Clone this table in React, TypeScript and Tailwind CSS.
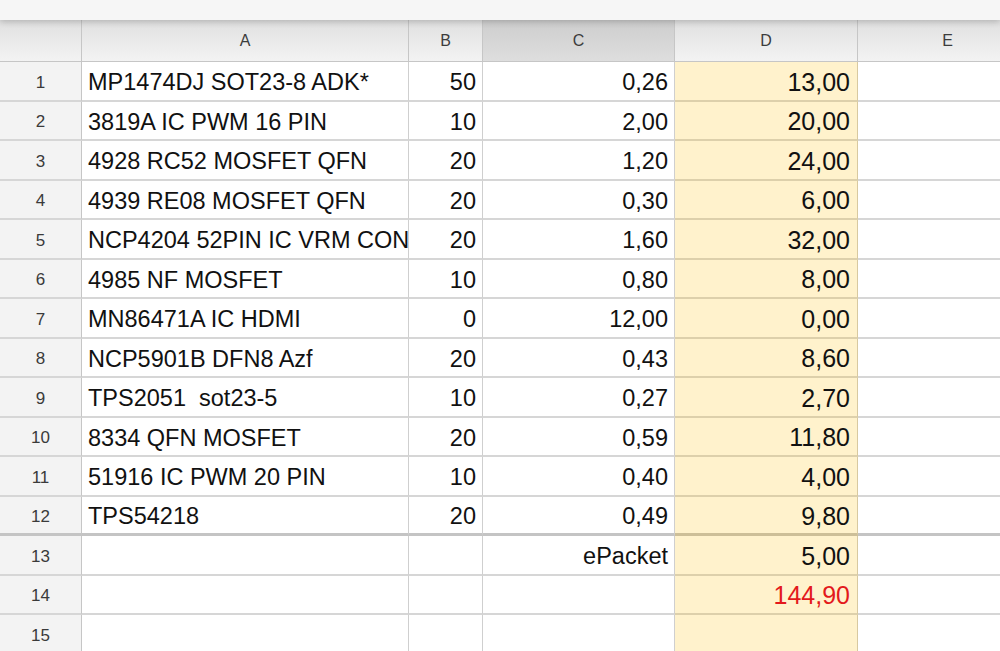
const cols = ["A", "B", "C", "D", "E"];

type Row = { a: string; b: string; c: string; d: string; red?: boolean };

const rows: Row[] = [
  { a: "MP1474DJ SOT23-8 ADK*", b: "50", c: "0,26", d: "13,00" },
  { a: "3819A IC PWM 16 PIN", b: "10", c: "2,00", d: "20,00" },
  { a: "4928 RC52 MOSFET QFN", b: "20", c: "1,20", d: "24,00" },
  { a: "4939 RE08 MOSFET QFN", b: "20", c: "0,30", d: "6,00" },
  { a: "NCP4204 52PIN IC VRM CONTROLLER", b: "20", c: "1,60", d: "32,00" },
  { a: "4985 NF MOSFET", b: "10", c: "0,80", d: "8,00" },
  { a: "MN86471A IC HDMI", b: "0", c: "12,00", d: "0,00" },
  { a: "NCP5901B DFN8 Azf", b: "20", c: "0,43", d: "8,60" },
  { a: "TPS2051\u00a0\u00a0sot23-5", b: "10", c: "0,27", d: "2,70" },
  { a: "8334 QFN MOSFET", b: "20", c: "0,59", d: "11,80" },
  { a: "51916 IC PWM 20 PIN", b: "10", c: "0,40", d: "4,00" },
  { a: "TPS54218", b: "20", c: "0,49", d: "9,80" },
  { a: "", b: "", c: "ePacket", d: "5,00" },
  { a: "", b: "", c: "", d: "144,90", red: true },
  { a: "", b: "", c: "", d: "" },
];

export default function App() {
  return (
    <div
      className="w-[1000px] h-[651px] overflow-hidden bg-white"
      style={{ fontFamily: "'Liberation Sans', Arial, sans-serif" }}
    >
      <div className="relative z-10 h-[20px] bg-[#f6f6f6] shadow-[0_2px_6px_rgba(0,0,0,0.2)]" />
      <div className="grid grid-cols-[82px_327px_74px_192px_183px_180px]">
        {/* header row */}
        <div className="h-[42px] border-r border-b border-[#c6c6c6] bg-gradient-to-b from-[#e0e0e0] to-[#f3f3f3]" />
        {cols.map((c) => (
          <div
            key={c}
            className={
              "h-[42px] flex items-center justify-center pt-[1px] border-r border-b border-[#c6c6c6] text-[16px] text-[#3c3c3c] " +
              (c === "C"
                ? "bg-gradient-to-b from-[#cdcdcd] to-[#dedede]"
                : "bg-gradient-to-b from-[#e0e0e0] to-[#f3f3f3]")
            }
          >
            {c}
          </div>
        ))}

        {rows.map((r, i) => {
          const line =
            i === 11 ? "border-b-[3px] border-b-[#c4c4c4]" : "border-b-2 border-b-[#d6d6d6]";
          return (
            <div key={i} className="contents">
              <div
                className={
                  "h-[39.5px] flex items-center justify-center pt-[3px] bg-[#f3f3f3] border-r border-r-[#c6c6c6] text-[17px] text-[#3a3a3a] " +
                  line
                }
              >
                {i + 1}
              </div>
              <div
                className={
                  "h-[39.5px] flex items-center pl-[6px] pt-[4px] border-r border-r-[#cfcfcf] text-[23.5px] text-[#111] whitespace-nowrap overflow-hidden " +
                  line
                }
              >
                {r.a}
              </div>
              <div
                className={
                  "h-[39.5px] flex items-center justify-end pr-[6px] pt-[4px] border-r border-r-[#cfcfcf] text-[23.5px] text-[#111] " +
                  line
                }
              >
                {r.b}
              </div>
              <div
                className={
                  "h-[39.5px] flex items-center justify-end pr-[6px] pt-[4px] border-r border-r-[#cfcfcf] text-[23.5px] text-[#111] " +
                  line
                }
              >
                {r.c}
              </div>
              <div
                className={
                  "h-[39.5px] flex items-center justify-end pr-[7px] pt-[3px] bg-[#fff2cc] border-r border-r-[#d8c9a0] text-[25px] " +
                  (r.red ? "text-[#e3191c] " : "text-[#111] ") +
                  (i === 11 ? "border-b-[3px] border-b-[#cdbf98]" : "border-b-2 border-b-[#ddd0ab]")
                }
              >
                {r.d}
              </div>
              <div className={"h-[39.5px] " + line} />
            </div>
          );
        })}
      </div>
    </div>
  );
}
